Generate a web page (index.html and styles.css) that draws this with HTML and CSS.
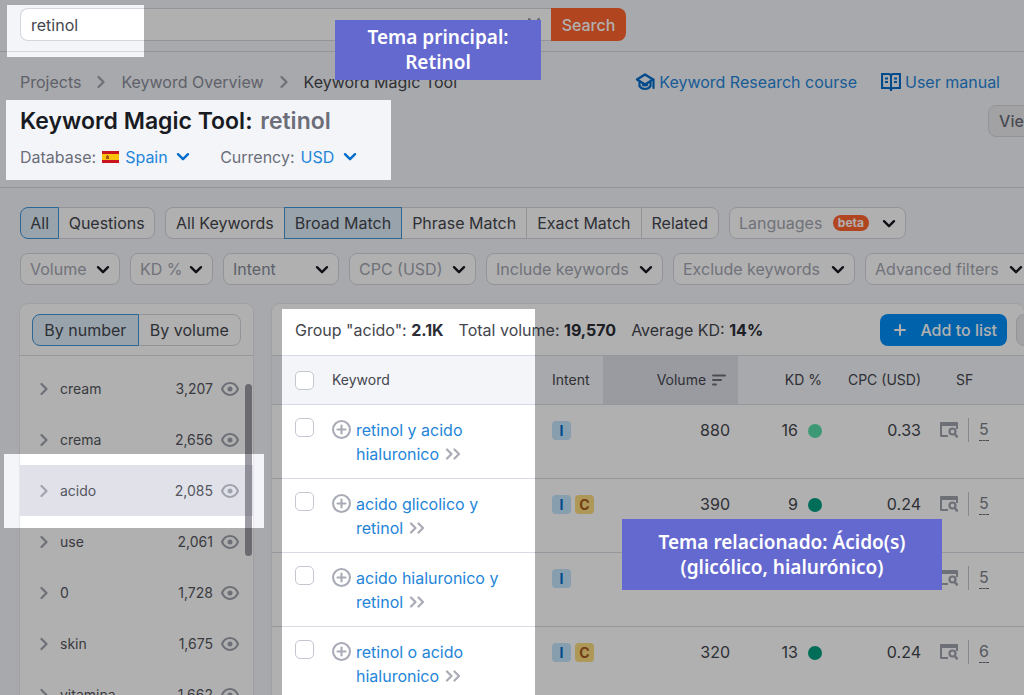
FILE: index.html
```html
<!DOCTYPE html>
<html lang="en">
<head>
<meta charset="utf-8">
<meta name="viewport" content="width=device-width, initial-scale=1">
<title>Keyword Magic Tool: retinol</title>
<link rel="stylesheet" href="styles.css">
</head>
<body>
<svg class="defs" aria-hidden="true">
  <symbol id="down" viewBox="0 0 14 10"><path d="M2 2.200l5 5 5-5" fill="none" stroke="currentColor" stroke-width="2.400" stroke-linecap="round" stroke-linejoin="round"/></symbol>
  <symbol id="right" viewBox="0 0 8 14"><path d="M1.500 2l5 5-5 5" fill="none" stroke="currentColor" stroke-width="2.200" stroke-linecap="round" stroke-linejoin="round"/></symbol>
  <symbol id="eye" viewBox="0 0 18 14"><path d="M1 7c1.700-3.800 4.600-5.900 8-5.900s6.300 2.100 8 5.900c-1.700 3.800-4.600 5.900-8 5.900S2.700 10.800 1 7z" fill="none" stroke="currentColor" stroke-width="2"/><circle cx="9" cy="7" r="2.500" fill="currentColor"/></symbol>
  <symbol id="plus-circle" viewBox="0 0 18 18"><circle cx="9" cy="9" r="8" fill="none" stroke="currentColor" stroke-width="2"/><path d="M9 5.200v7.600M5.200 9h7.600" stroke="currentColor" stroke-width="2" stroke-linecap="round"/></symbol>
  <symbol id="double" viewBox="0 0 16 12"><path d="M2 1.500L6.500 6 2 10.500M9.500 1.500L14 6l-4.500 4.500" fill="none" stroke="currentColor" stroke-width="2.200" stroke-linecap="round" stroke-linejoin="round"/></symbol>
  <symbol id="serp" viewBox="0 0 18 16"><path d="M0 1.200C0 .5.500 0 1.200 0h15.600c.7 0 1.200.5 1.200 1.200V7h-2V4H2v9h6v2H1.200C.5 15 0 14.500 0 13.800z" fill="currentColor"/><circle cx="12.500" cy="9.500" r="3" fill="none" stroke="currentColor" stroke-width="2.200"/><path d="M14.700 12l2.300 2.600" stroke="currentColor" stroke-width="2.400" stroke-linecap="round"/></symbol>
</svg>

<header class="topbar">
  <form class="search">
    <div class="search-field">
      <input class="search-input" type="text" value="retinol" aria-label="Keyword">
      <button class="search-clear" type="reset" aria-label="Clear"><svg viewBox="0 0 14 14"><path d="M2 2l10 10M12 2L2 12" stroke="currentColor" stroke-width="2" stroke-linecap="round"/></svg></button>
    </div>
    <button class="search-button" type="submit">Search</button>
  </form>
</header>

<section class="intro">
  <div class="intro-top">
    <nav class="crumbs" aria-label="Breadcrumb">
      <a href="#projects">Projects</a>
      <svg class="crumb-arrow"><use href="#right"/></svg>
      <a href="#overview">Keyword Overview</a>
      <svg class="crumb-arrow"><use href="#right"/></svg>
      <a class="current" href="#magic">Keyword Magic Tool</a>
    </nav>
    <div class="help">
      <a href="#course"><svg class="help-icon" viewBox="0 0 20 18"><path d="M10 1.500l8 5-8 5-8-5z" fill="none" stroke="currentColor" stroke-width="2.400" stroke-linejoin="round"/><path d="M4.500 9v4.200c1.300 1.900 3.200 2.800 5.500 2.800s4.200-.9 5.500-2.800V9" fill="none" stroke="currentColor" stroke-width="2.200"/><path d="M7 11.800c2 1.100 4 1.100 6 0" fill="none" stroke="currentColor" stroke-width="1.800"/><path d="M18.500 6.500V15" stroke="currentColor" stroke-width="2.200" stroke-linecap="round"/></svg>Keyword Research course</a>
      <a href="#manual"><svg class="help-icon" viewBox="0 0 20 20"><path d="M1 2h6.500C9 2 10 2.800 10 4c0-1.200 1-2 2.500-2H19v14h-6.500c-1.500 0-2.500.6-2.500 1.800C10 16.600 9 16 7.500 16H1z" fill="none" stroke="currentColor" stroke-width="2.200"/><path d="M10 3.500V19M4 6.500h3M4 10h3M13 6.500h3M13 10h3" stroke="currentColor" stroke-width="2"/></svg>User manual</a>
    </div>
  </div>
  <div class="title-row">
    <h1>Keyword Magic Tool: <span>retinol</span></h1>
    <button class="ghost view" type="button">View</button>
  </div>
  <div class="settings">
    <div class="setting">
      <label for="db">Database:</label>
      <svg class="flag" viewBox="0 0 17 12"><path fill="#c8141e" d="M0 0h17v12H0z"/><path fill="#fcc10b" d="M0 3h17v6H0z"/><path fill="#a5541c" d="M4 5h1V4h1v1h1v3H4z"/></svg>
      <select id="db"><option>Spain</option></select>
      <svg class="down"><use href="#down"/></svg>
    </div>
    <div class="setting">
      <label for="cur">Currency:</label>
      <select id="cur"><option>USD</option></select>
      <svg class="down"><use href="#down"/></svg>
    </div>
  </div>
</section>

<main>
  <div class="filters">
    <div class="group w-type" role="group" aria-label="Type">
      <button type="button" aria-pressed="true">All</button>
      <button type="button" aria-pressed="false">Questions</button>
    </div>
    <div class="group w-match" role="group" aria-label="Match">
      <button type="button" aria-pressed="false">All Keywords</button>
      <button type="button" aria-pressed="true">Broad Match</button>
      <button type="button" aria-pressed="false">Phrase Match</button>
      <button type="button" aria-pressed="false">Exact Match</button>
      <button type="button" aria-pressed="false">Related</button>
    </div>
    <div class="pick w-lang"><select aria-label="Languages"><option>Languages</option></select><span class="beta">beta</span><svg class="down"><use href="#down"/></svg></div>
  </div>
  <div class="filters">
    <div class="pick w-volume"><select aria-label="Volume"><option>Volume</option></select><svg class="down"><use href="#down"/></svg></div>
    <div class="pick w-kd"><select aria-label="KD %"><option>KD %</option></select><svg class="down"><use href="#down"/></svg></div>
    <div class="pick w-intent"><select aria-label="Intent"><option>Intent</option></select><svg class="down"><use href="#down"/></svg></div>
    <div class="pick w-cpc"><select aria-label="CPC (USD)"><option>CPC (USD)</option></select><svg class="down"><use href="#down"/></svg></div>
    <div class="pick w-include"><select aria-label="Include keywords"><option>Include keywords</option></select><svg class="down"><use href="#down"/></svg></div>
    <div class="pick w-exclude"><select aria-label="Exclude keywords"><option>Exclude keywords</option></select><svg class="down"><use href="#down"/></svg></div>
    <div class="pick w-advanced"><select aria-label="Advanced filters"><option>Advanced filters</option></select><svg class="down"><use href="#down"/></svg></div>
  </div>

  <div class="workspace">
    <aside class="panel side">
      <div class="side-head">
        <div class="group" role="group" aria-label="Sort groups">
          <button type="button" aria-pressed="true">By number</button>
          <button type="button" aria-pressed="false">By volume</button>
        </div>
      </div>
      <ul class="groups">
        <li><svg class="arrow"><use href="#right"/></svg><a href="#cream">cream</a><span>3,207</span><svg class="eye"><use href="#eye"/></svg></li>
        <li><svg class="arrow"><use href="#right"/></svg><a href="#crema">crema</a><span>2,656</span><svg class="eye"><use href="#eye"/></svg></li>
        <li class="active"><svg class="arrow"><use href="#right"/></svg><a href="#acido">acido</a><span>2,085</span><svg class="eye"><use href="#eye"/></svg></li>
        <li><svg class="arrow"><use href="#right"/></svg><a href="#use">use</a><span>2,061</span><svg class="eye"><use href="#eye"/></svg></li>
        <li><svg class="arrow"><use href="#right"/></svg><a href="#zero">0</a><span>1,728</span><svg class="eye"><use href="#eye"/></svg></li>
        <li><svg class="arrow"><use href="#right"/></svg><a href="#skin">skin</a><span>1,675</span><svg class="eye"><use href="#eye"/></svg></li>
        <li><svg class="arrow"><use href="#right"/></svg><a href="#vitamina">vitamina</a><span>1,662</span><svg class="eye"><use href="#eye"/></svg></li>
      </ul>
      <div class="thumb"></div>
    </aside>

    <section class="panel results">
      <div class="results-head">
        <p>Group "acido": <b>2.1K</b></p>
        <p>Total volume: <b>19,570</b></p>
        <p>Average KD: <b>14%</b></p>
        <button class="add" type="button"><svg viewBox="0 0 12 12"><path d="M6 1v10M1 6h10" stroke="currentColor" stroke-width="2" stroke-linecap="round"/></svg>Add to list</button>
        <button class="ghost more" type="button" aria-label="Update"></button>
      </div>
      <table>
        <colgroup><col class="c-check"><col><col class="c-intent"><col class="c-volume"><col class="c-kd"><col class="c-cpc"><col class="c-sf"></colgroup>
        <thead>
          <tr>
            <th><input type="checkbox" aria-label="Select all"></th>
            <th>Keyword</th>
            <th>Intent</th>
            <th class="num sorted">Volume <svg class="sort" viewBox="0 0 14 12"><path d="M1 1.500h12M1 6h8M1 10.500h3" stroke="currentColor" stroke-width="2" stroke-linecap="round"/></svg></th>
            <th class="num">KD %</th>
            <th class="num">CPC (USD)</th>
            <th class="sf-title">SF</th>
          </tr>
        </thead>
        <tbody>
          <tr>
            <td><input type="checkbox" aria-label="Select retinol y acido hialuronico"></td>
            <td><div class="kw"><svg class="plus"><use href="#plus-circle"/></svg><a href="#k1">retinol y acido hialuronico <svg class="double"><use href="#double"/></svg></a></div></td>
            <td><div class="tags"><span class="tag i">I</span></div></td>
            <td class="num">880</td>
            <td class="num">16<i class="dot light"></i></td>
            <td class="num">0.33</td>
            <td><div class="sf"><svg class="serp"><use href="#serp"/></svg><span class="sf-count"><a href="#s1">5</a></span></div></td>
          </tr>
          <tr>
            <td><input type="checkbox" aria-label="Select acido glicolico y retinol"></td>
            <td><div class="kw"><svg class="plus"><use href="#plus-circle"/></svg><a href="#k2">acido glicolico y retinol <svg class="double"><use href="#double"/></svg></a></div></td>
            <td><div class="tags"><span class="tag i">I</span><span class="tag c">C</span></div></td>
            <td class="num">390</td>
            <td class="num">9<i class="dot"></i></td>
            <td class="num">0.24</td>
            <td><div class="sf"><svg class="serp"><use href="#serp"/></svg><span class="sf-count"><a href="#s2">5</a></span></div></td>
          </tr>
          <tr>
            <td><input type="checkbox" aria-label="Select acido hialuronico y retinol"></td>
            <td><div class="kw"><svg class="plus"><use href="#plus-circle"/></svg><a href="#k3">acido hialuronico y retinol <svg class="double"><use href="#double"/></svg></a></div></td>
            <td><div class="tags"><span class="tag i">I</span></div></td>
            <td class="num"></td>
            <td class="num"></td>
            <td class="num"></td>
            <td><div class="sf"><svg class="serp"><use href="#serp"/></svg><span class="sf-count"><a href="#s3">5</a></span></div></td>
          </tr>
          <tr>
            <td><input type="checkbox" aria-label="Select retinol o acido hialuronico"></td>
            <td><div class="kw"><svg class="plus"><use href="#plus-circle"/></svg><a href="#k4">retinol o acido hialuronico <svg class="double"><use href="#double"/></svg></a></div></td>
            <td><div class="tags"><span class="tag i">I</span><span class="tag c">C</span></div></td>
            <td class="num">320</td>
            <td class="num">13<i class="dot"></i></td>
            <td class="num">0.24</td>
            <td><div class="sf"><svg class="serp"><use href="#serp"/></svg><span class="sf-count"><a href="#s4">6</a></span></div></td>
          </tr>
        </tbody>
      </table>
    </section>
  </div>
</main>

<svg class="scrim" aria-hidden="true"><path fill-rule="evenodd" d="M0 0H6000V4000H0zM7 5V57H144V5zM6 100V180H391V100zM4 454V528H264V454zM282 309V4000H535V309z"/></svg>
<div class="note note-main">Tema principal:<br>Retinol</div>
<div class="note note-related">Tema relacionado: Ácido(s)<br>(glicólico, hialurónico)</div>
</body>
</html>
```
FILE: styles.css
```css
* { box-sizing: border-box; }

body {
  margin: 0;
  height: 100vh;
  overflow: hidden;
  display: flex;
  flex-direction: column;
  background: #f4f5f9;
  color: #44464e;
  font: 16px/24px Inter, "Liberation Sans", sans-serif;
}

button, input, select { font: inherit; color: inherit; margin: 0; }
button { cursor: pointer; white-space: nowrap; }
a { color: #2385d9; text-decoration: none; }
svg { flex: none; }
.defs { position: absolute; width: 0; height: 0; }

.topbar { padding: 8px 20px 10px; border-bottom: 1px solid #d5d6de; }
.search { display: flex; max-width: 606px; }
.search-field { position: relative; flex: 1; }
.search-input {
  display: block;
  width: 100%;
  height: 33px;
  padding: 0 10px;
  border: 1px solid #d5d6de;
  border-right: 0;
  border-radius: 8px 0 0 8px;
  background: #fff;
}
.search-clear {
  position: absolute;
  right: 10px;
  top: 9px;
  width: 14px;
  padding: 0;
  border: 0;
  background: none;
  color: #8a8e9b;
  line-height: 0;
}
.search-button {
  width: 75px;
  padding: 0;
  border: 0;
  border-radius: 0 8px 8px 0;
  background: #ff642d;
  color: #fff;
  font-weight: 500;
}

.intro { padding: 18px 24px 18px 20px; border-bottom: 1px solid #d5d6de; }
.intro-top, .crumbs, .help, .help a, .title-row, .settings, .setting { display: flex; align-items: center; }
.intro-top, .title-row { justify-content: space-between; }
.crumbs { gap: 16px; }
.crumbs a { color: #898d9a; }
.crumbs .current { color: #44464e; }
.crumb-arrow { width: 8px; height: 14px; color: #a0a3ae; }
.help { gap: 24px; }
.help a { gap: 4px; }
.help-icon { width: 20px; height: 20px; color: #006dca; }
.title-row { padding-top: 9px; }
h1 { margin: 0; font-size: 23px; line-height: 36px; font-weight: 600; color: #191b23; }
h1 span { color: #6c6e79; margin-left: 2px; }
.ghost {
  height: 32px;
  border: 1px solid #d5d6de;
  border-radius: 8px;
  background: #ebebf0;
  color: #6c6e79;
  font-weight: 500;
}
.view { margin-right: -48px; padding: 0 9px; width: 60px; }
.settings { gap: 30px; padding-top: 6px; }
.setting { gap: 6px; }
.setting label { color: #6c6e79; }
.setting select { padding: 0; border: 0; background: none; appearance: none; color: #2385d9; }
.setting .down { color: #006dca; margin-left: 2px; }
.flag { width: 17px; height: 12px; }
.down { width: 14px; height: 10px; color: #191b23; }

main { flex: 1; min-height: 0; display: flex; flex-direction: column; gap: 14px; padding: 19px 0 0 20px; }
.filters { display: flex; gap: 10px; }
.group { display: flex; flex: none; }
.group button {
  flex: auto;
  height: 32px;
  padding: 0 8px;
  border: 1px solid #d5d6de;
  margin-left: -1px;
  background: #fff;
}
.group button:first-child { margin-left: 0; border-radius: 8px 0 0 8px; }
.group button:last-child { border-radius: 0 8px 8px 0; }
.group button[aria-pressed="true"] { position: relative; border-color: #4096da; background: #dcecf9; }
.w-type { width: 135px; }
.w-match { width: 554px; }

.pick { position: relative; flex: none; }
.pick select {
  width: 100%;
  height: 32px;
  padding: 0 9px;
  border: 1px solid #d5d6de;
  border-radius: 8px;
  background: #fff;
  appearance: none;
  color: #a3a6b2;
}
.pick .down { position: absolute; right: 10px; top: 12px; pointer-events: none; }
.w-lang { width: 177px; }
.w-volume { width: 100px; }
.w-kd { width: 83px; }
.w-intent { width: 116px; }
.w-intent select { color: #898d9a; }
.w-cpc { width: 127px; }
.w-include { width: 177px; }
.w-exclude { width: 182px; }
.w-advanced { width: 168px; }
.beta {
  position: absolute;
  right: 37px;
  top: 8px;
  padding: 0 5px;
  border-radius: 8px;
  background: #ff642d;
  color: #fff;
  font-size: 12px;
  line-height: 16px;
  font-weight: 700;
}

.workspace {
  flex: 1;
  min-height: 0;
  display: grid;
  grid-template-columns: 233px minmax(0, 1fr);
  gap: 19px;
  padding-top: 5px;
}
.panel { background: #fff; border-radius: 8px 8px 0 0; box-shadow: 0 0 1px 1px #e6e7ee; min-height: 0; overflow: hidden; }
.side { position: relative; }
.side-head { padding: 10px 12px 9px; border-bottom: 1px solid #d9dae3; }
.groups { margin: 0; padding: 7px 0 0; list-style: none; font-size: 14px; }
.groups li { display: flex; align-items: center; gap: 8px; height: 51px; padding: 0 14px 0 20px; }
.groups a { flex: 1; margin-left: 4px; color: #55565e; }
.groups span { color: #55565e; }
.groups .active { background: #e0e1e9; }
.arrow { width: 8px; height: 14px; color: #a0a3ae; }
.eye { width: 18px; height: 14px; color: #a0a3ae; }
.thumb { position: absolute; right: 1px; top: 80px; width: 7px; height: 172px; border-radius: 4px; background: rgba(90, 86, 100, .6); }

.results-head { display: flex; align-items: center; height: 52px; padding: 0 16px 0 23px; border-bottom: 1px solid #d9dae3; white-space: nowrap; gap: 15px; }
.results-head p { margin: 0; }
.results-head b { color: #2b2d35; font-weight: 700; }
.add {
  display: flex;
  align-items: center;
  gap: 14px;
  height: 32px;
  margin-left: auto;
  padding: 0 10px 0 14px;
  border: 0;
  border-radius: 8px;
  background: #008ff8;
  color: #fff;
  font-weight: 500;
}
.add svg { width: 12px; height: 12px; }
.more { width: 40px; flex: none; margin: 0 -48px 0 -6px; }

table { width: 100%; border-collapse: separate; border-spacing: 0; table-layout: fixed; }
.c-check { width: 52px; }
.c-intent { width: 59px; }
.c-volume { width: 135px; }
.c-kd { width: 92px; }
.c-cpc { width: 99px; }
.c-sf { width: 95px; }
th { height: 49px; padding: 0 8px; text-align: left; vertical-align: middle; white-space: nowrap; font-size: 14px; font-weight: 400; background: #f4f5f9; border-bottom: 1px solid #d9dae3; }
td { height: 74px; padding: 13px 8px 0; vertical-align: top; border-bottom: 1px solid #d9dae3; }
th.num, td.num { text-align: right; }
th.sorted { background: #e0e1e9; padding-right: 12px; }
td:first-child, th:first-child { padding-left: 23px; }
th input, td input {
  display: block;
  width: 19px;
  height: 19px;
  appearance: none;
  border: 1px solid #c4c7cf;
  border-radius: 5px;
  background: #fff;
}
.sort { width: 14px; height: 12px; margin-left: 2px; vertical-align: -1px; color: #6c6e79; }
.kw { display: flex; gap: 5px; padding-right: 32px; }
.plus { width: 19px; height: 19px; margin-top: 2px; color: #a9abb6; }
.double { width: 16px; height: 12px; margin-left: 1px; color: #a9abb6; }
.tags { display: flex; gap: 4px; padding-top: 3px; }
.tag { width: 19px; height: 19px; border-radius: 4px; font-size: 14px; line-height: 19px; font-weight: 700; text-align: center; }
.tag.i { background: #c4e5fe; color: #006dca; }
.tag.c { background: #fcdc7e; color: #a75a20; }
.dot { display: inline-block; width: 14px; height: 14px; margin-left: 10px; border-radius: 50%; background: #009f81; vertical-align: -2px; }
.dot.light { background: #59ddaa; }
.sf { display: flex; align-items: center; gap: 10px; padding-left: 3px; }
.serp { width: 18px; height: 16px; color: #a0a3ae; }
.sf-count { height: 24px; padding-left: 10px; border-left: 1px solid #c4c7cf; }
.sf-count a { display: block; color: #7c7f8a; line-height: 22px; border-bottom: 1px dashed #6c6e79; }
th.sf-title { padding-left: 27px; }

.scrim { position: fixed; inset: 0; width: 100%; height: 100%; pointer-events: none; fill: #000; fill-opacity: .31; }
.note {
  position: absolute;
  display: flex;
  align-items: center;
  justify-content: center;
  background: #6469cf;
  color: #fff;
  font: 600 19px/25px "Noto Sans", "Open Sans", sans-serif;
  text-align: center;
}
.note-main { left: 335px; top: 20px; width: 206px; height: 60px; }
.note-related { left: 622px; top: 519px; width: 320px; height: 71px; }
```
